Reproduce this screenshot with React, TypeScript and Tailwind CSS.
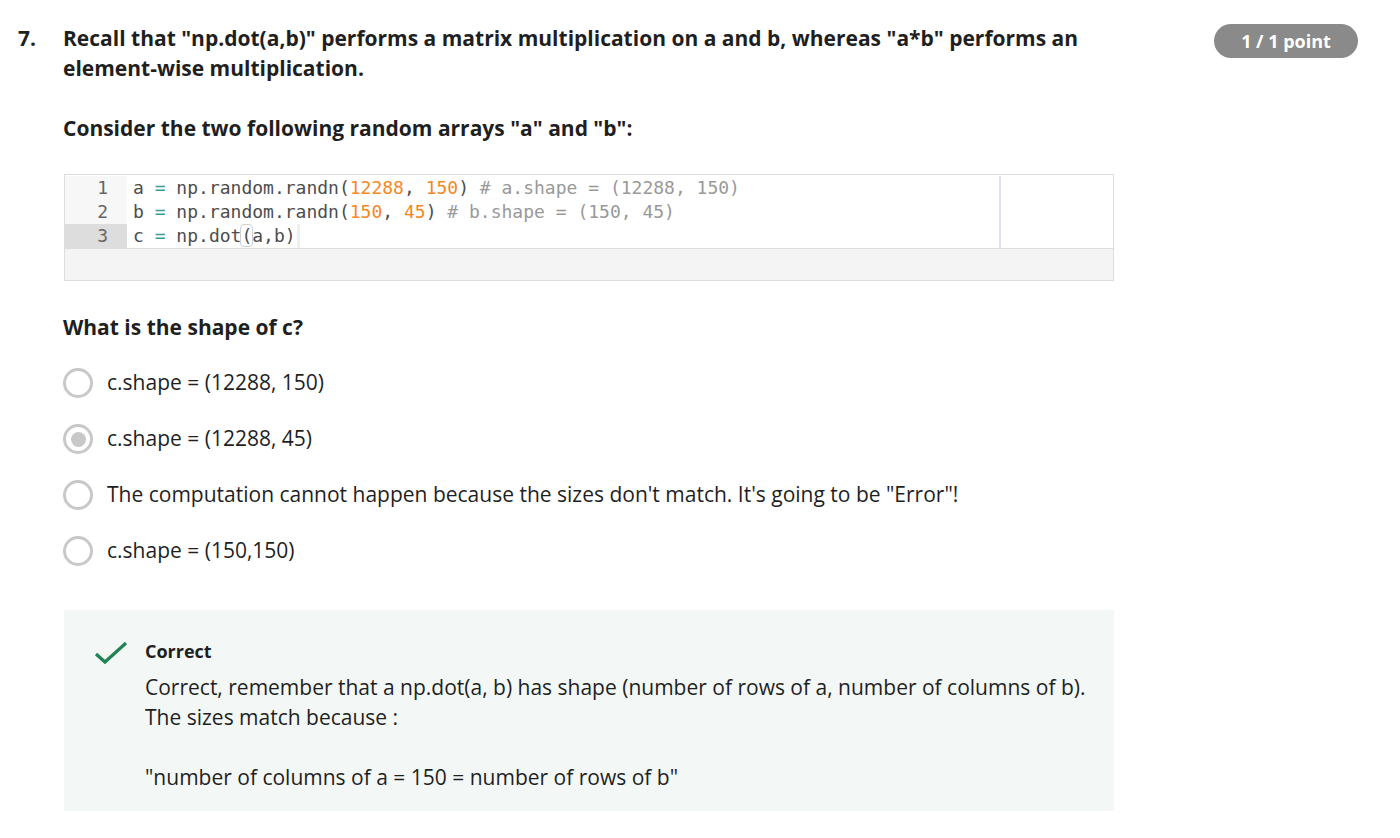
import React from "react";

const Radio = ({ checked }: { checked?: boolean }) => (
  <span className="flex h-[30px] w-[30px] shrink-0 items-center justify-center rounded-full border-[3px] border-[#c8c8c8] bg-white">
    {checked && <span className="h-[15px] w-[15px] rounded-full bg-[#c8c8c8]" />}
  </span>
);

const Option = ({ text, checked }: { text: string; checked?: boolean }) => (
  <div className="flex h-[56px] items-center gap-[14px]">
    <Radio checked={checked} />
    <span className="text-[21px] text-[#1f1f1f]">{text}</span>
  </div>
);

const N = ({ c }: { c: string }) => <span className="text-[#f5871f]">{c}</span>;
const E = () => <span className="text-[#3e999f]">=</span>;
const C = ({ c }: { c: string }) => <span className="text-[#999999]">{c}</span>;

export default function App() {
  return (
    <div
      className="min-h-[838px] bg-white text-[#1f1f1f]"
      style={{ fontFamily: '"Open Sans", "Noto Sans", sans-serif' }}
    >
      <div className="flex pl-[18px] pt-[23px]">
        <div className="w-[45px] shrink-0 text-[21px] font-bold leading-[30px]">7.</div>
        <div className="w-[1050px] shrink-0">
          <div className="text-[21px] font-bold leading-[30px]">
            Recall that "np.dot(a,b)" performs a matrix multiplication on a and b, whereas "a*b" performs an element-wise multiplication.
          </div>
          <div className="mt-[30px] text-[21px] font-bold leading-[30px]">
            Consider the two following random arrays "a" and "b":
          </div>
          <div className="mt-[31px] ml-[1px] w-[1050px] border border-[#dddddd] bg-[#f4f4f4]">
            <div
              className="flex h-[74px] border-b border-[#dddddd] bg-white pt-[1px] text-[18px] leading-[24px] text-[#4d4d4d]"
              style={{ fontFamily: '"DejaVu Sans Mono", "Liberation Mono", monospace' }}
            >
              <div className="flex w-[62px] shrink-0 flex-col bg-[#f7f7f7] text-right text-[#666666]">
                <div className="pr-[19px]">1</div>
                <div className="pr-[19px]">2</div>
                <div className="bg-[#dddddd] pr-[19px]">3</div>
              </div>
              <div className="flex flex-1 flex-col pl-[6px] pt-0 whitespace-pre">
                <div>
                  a <E /> np.random.randn(<N c="12288" />, <N c="150" />) <C c="# a.shape = (12288, 150)" />
                </div>
                <div>
                  b <E /> np.random.randn(<N c="150" />, <N c="45" />) <C c="# b.shape = (150, 45)" />
                </div>
                <div className="flex">
                  <span className="border-r-[3px] border-[#eeeeee] pr-[1px]">
                    c <E /> np.dot<span className="rounded-[3px] outline outline-1 outline-[#cfcfcf]">(</span>a,b)
                  </span>
                </div>
              </div>
              <div className="w-[114px] shrink-0 border-l-2 border-[#dde3ea]" />
            </div>
            <div className="h-[31px]" />
          </div>
          <div className="mt-[31px] text-[21px] font-bold leading-[30px]">What is the shape of c?</div>
          <div className="mt-[13px] flex flex-col">
            <Option text="c.shape = (12288, 150)" />
            <Option text="c.shape = (12288, 45)" checked />
            <Option text={'The computation cannot happen because the sizes don\'t match. It\'s going to be "Error"!'} />
            <Option text="c.shape = (150,150)" />
          </div>
          <div className="mt-[31px] ml-[1px] flex w-[1050px] gap-[17px] bg-[#f3f8f6] pl-[30px] pt-[28px] pb-[19px]">
            <svg width="34" height="26" viewBox="0 0 34 26" className="mt-[2px] shrink-0">
              <path d="M2 14 L11 22 L32 3" fill="none" stroke="#1f8354" strokeWidth="3.2" />
            </svg>
            <div>
              <div className="text-[18px] font-bold leading-[26px]">Correct</div>
              <div className="mt-[8px] text-[21px] leading-[30px]">
                <div>Correct, remember that a np.dot(a, b) has shape (number of rows of a, number of columns of b).</div>
                <div>The sizes match because :</div>
                <div className="h-[30px]" />
                <div>"number of columns of a = 150 = number of rows of b"</div>
              </div>
            </div>
          </div>
        </div>
        <div className="ml-[101px] mt-[1px] flex h-[34px] w-[144px] shrink-0 items-center justify-center rounded-full bg-[#8a8a8a] text-[18px] font-bold text-white">
          1 / 1 point
        </div>
      </div>
    </div>
  );
}
